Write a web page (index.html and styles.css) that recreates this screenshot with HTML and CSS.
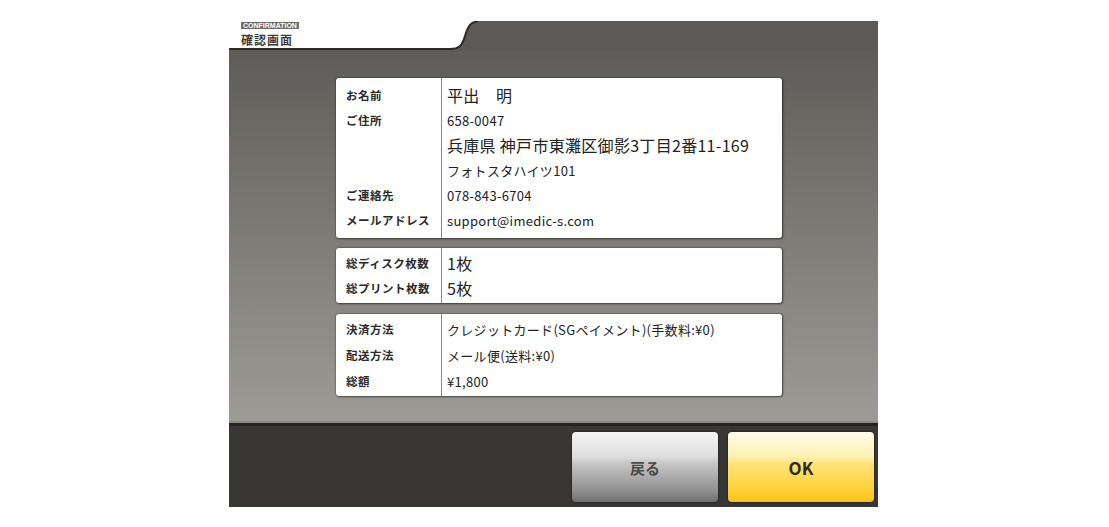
FILE: index.html
```html
<!DOCTYPE html>
<html lang="ja">
  <head>
    <meta charset="UTF-8" />
    <meta name="viewport" content="width=device-width, initial-scale=1.0" />
    <title>確認画面</title>
    <link rel="stylesheet" href="styles.css">
  </head>
  <body>
    <div class="screen">
      <div class="header">
        <div class="title">
          <span class="badge">CONFIRMATION</span>
          <h1>確認画面</h1>
        </div>
        <svg class="curve" width="30" height="29" viewBox="0 0 30 29">
          <path d="M0 28 C9 28 12 25 15 15 C18 5 21 0 30 0 L30 29 L0 29 Z" fill="#5c5a56" />
          <path d="M0 28 C9 28 12 25 15 15 C18 5 21 0.5 28 0.5" fill="none" stroke="#2b2a28" stroke-width="2" />
        </svg>
        <div class="tab-fill"></div>
      </div>

      <div class="panel">
        <div class="card">
          <div class="label">お名前</div>
          <div class="value big">平出　明</div>
          <div class="label">ご住所</div>
          <div class="value">658-0047</div>
          <div class="label"></div>
          <div class="value big">兵庫県 神戸市東灘区御影3丁目2番11-169</div>
          <div class="label"></div>
          <div class="value">フォトスタハイツ101</div>
          <div class="label">ご連絡先</div>
          <div class="value">078-843-6704</div>
          <div class="label">メールアドレス</div>
          <div class="value">support@imedic-s.com</div>
        </div>

        <div class="card small">
          <div class="label">総ディスク枚数</div>
          <div class="value big">1枚</div>
          <div class="label">総プリント枚数</div>
          <div class="value big">5枚</div>
        </div>

        <div class="card pay">
          <div class="label">決済方法</div>
          <div class="value">クレジットカード(SGペイメント)(手数料:¥0)</div>
          <div class="label">配送方法</div>
          <div class="value">メール便(送料:¥0)</div>
          <div class="label">総額</div>
          <div class="value">¥1,800</div>
        </div>
      </div>

      <div class="footer">
        <button class="btn back">戻る</button>
        <button class="btn ok">OK</button>
      </div>
    </div>
  </body>
</html>
```

FILE: styles.css
```css
body {
  margin: 0;
  background-color: #fff;
  font-family: "Noto Sans CJK JP", "Noto Sans", sans-serif;
  color: #222;
}
.screen {
  width: 649px;
  margin: 21px 0 0 229px;
}
.header {
  display: flex;
  height: 29px;
}
.title {
  width: 209px;
  height: 27px;
  padding-left: 12px;
  border-bottom: 2px solid #2b2a28;
  background-color: #fff;
}
.badge {
  display: block;
  width: fit-content;
  margin-top: 1px;
  padding: 0 2px;
  background-color: #6e6d6b;
  color: #fff;
  font-family: "Liberation Sans", Arial, sans-serif;
  font-size: 7px;
  font-weight: bold;
  line-height: 7px;
}
.title h1 {
  margin: 4px 0 0;
  font-size: 12px;
  line-height: 13px;
  font-weight: bold;
  color: #3a3a3a;
  letter-spacing: 1px;
}
.curve {
  display: block;
}
.tab-fill {
  flex: 1;
  background-color: #5c5a56;
}
.panel {
  height: 343px;
  padding: 28px 0 0 107px;
  background: linear-gradient(#5e5c58, #9d9b96);
  border-bottom: 2px solid #8c8a86;
}
.card {
  width: 446px;
  display: grid;
  grid-template-columns: 105px 1fr;
  grid-auto-rows: 25px;
  padding: 5px 0;
  margin-bottom: 10px;
  border-radius: 3px;
  background: linear-gradient(#8a8a8a, #8a8a8a) 105px 0 / 1px 100% no-repeat, #fff;
  box-shadow: 0 0 2px rgba(0, 0, 0, 0.7), 1px 1px 2px rgba(0, 0, 0, 0.4);
}
.card.small {
  padding: 3px 0 2px;
  margin-bottom: 11px;
}
.card.pay {
  grid-auto-rows: 26px;
  padding: 3px 0 1px;
}
.label {
  padding-left: 10px;
  font-size: 11.5px;
  font-weight: bold;
  letter-spacing: 0.5px;
  line-height: 25px;
  color: #2a2a2a;
}
.value {
  padding-left: 6px;
  font-size: 13px;
  letter-spacing: 0.3px;
  line-height: 25px;
  white-space: nowrap;
}
.value.big {
  font-size: 16px;
}
.footer {
  display: flex;
  justify-content: flex-end;
  gap: 10px;
  height: 70px;
  padding: 6px 4px 5px 0;
  background-color: #383736;
  border-top: 3px solid #262321;
}
.btn {
  width: 146px;
  height: 70px;
  border: none;
  border-radius: 4px;
  font-family: "Noto Sans CJK JP", "Noto Sans", sans-serif;
  font-weight: bold;
  cursor: pointer;
  box-shadow: 0 0 2px rgba(0, 0, 0, 0.8);
}
.back {
  background: linear-gradient(#f3f3f3 0%, #dedede 35%, #c6c6c6 45%, #8e8e8e 85%, #6f6f6f 100%);
  color: #4a4a4a;
  font-size: 15px;
}
.ok {
  background: linear-gradient(#fffcec 0%, #fff1b3 35%, #ffe37a 45%, #ffd33c 80%, #f7c21a 100%);
  color: #2a2a2a;
  font-size: 17px;
}
```
